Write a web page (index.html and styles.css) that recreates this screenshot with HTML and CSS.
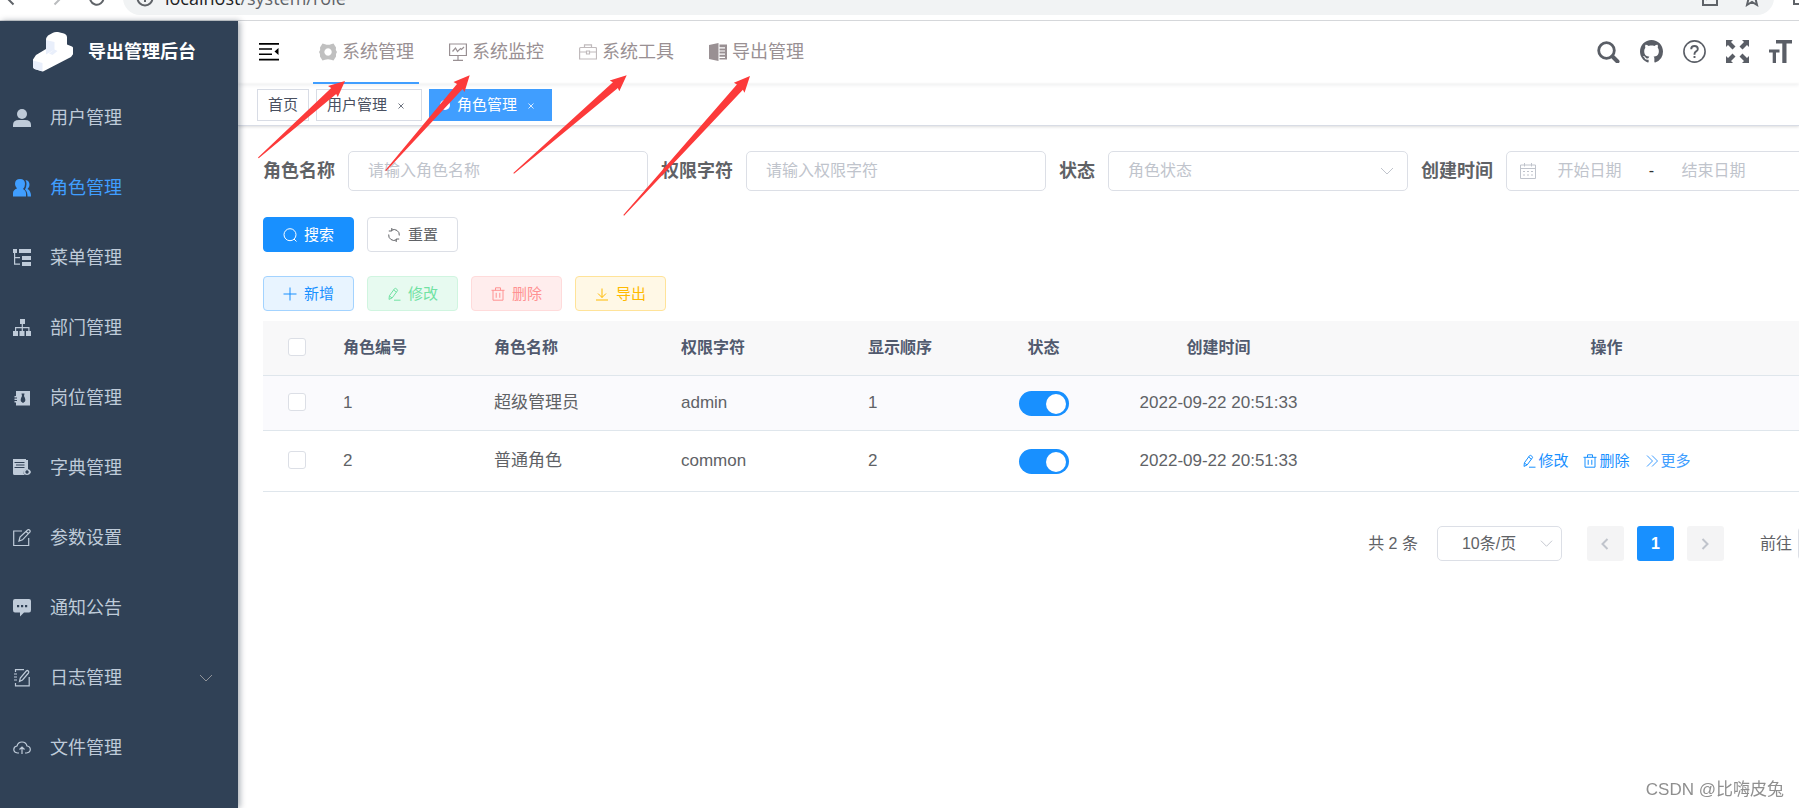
FILE: index.html
```html
<!DOCTYPE html>
<html lang="zh-CN">
<head>
<meta charset="utf-8">
<title>角色管理</title>
<link rel="stylesheet" href="styles.css">
</head>
<body>
<svg class="sprite" aria-hidden="true">
  <symbol id="i-edit" viewBox="0 0 14 14"><path d="M2 12.4 2.4 8.800 7.600 1.600q.4-.6 1-.2l1.700 1.200q.6.4.2 1L5.200 10.900ZM6.600 3l2.900 2.100M2.400 9l2.600 1.900M7 13.200h6.500"/></symbol>
  <symbol id="i-trash" viewBox="0 0 14 14"><path d="M.5 3.300h13M2 3.300v9.900h10V3.300M4.500 3.300V.8h5v2.500M5.200 5.800v5M8.800 5.800v5"/></symbol>
  <symbol id="i-down" viewBox="0 0 14 14"><path d="m1 4 6 6 6-6"/></symbol>
</svg>

<div class="browser">
  <div class="browser-nav">
    <svg viewBox="0 0 20 20"><path d="M17 10H4M10.500 3.500 4 10l6.500 6.500"/></svg>
    <svg class="dim" viewBox="0 0 20 20"><path d="M3 10h13M9.500 3.500 16 10l-6.500 6.500"/></svg>
    <svg viewBox="0 0 20 20"><path d="M16.500 10A6.700 6.700 0 1 1 14.500 5.200M16.500 2v5h-5"/></svg>
  </div>
  <div class="address">
    <svg viewBox="0 0 20 20"><circle cx="10" cy="10" r="7.500"/><path d="M10 9v5M10 6v1.500"/></svg>
    <span class="url"><b>localhost</b>/system/role</span>
    <svg class="share" viewBox="0 0 20 20"><path d="M7 4H3v13h14v-5M6 12c1-4 4-5 10-5M12 3l4 4-4 4"/></svg>
    <svg viewBox="0 0 20 20"><path d="m10 2 2.300 5.300 5.700.5-4.300 3.800L15 17l-5-3-5 3 1.300-5.400L2 7.800l5.700-.5Z"/></svg>
  </div>
  <svg class="panel" viewBox="0 0 20 20"><path d="M3 3h14v13H3Z"/></svg>
</div>

<div class="app">
  <aside class="sidebar">
    <a class="logo" href="#">
      <svg viewBox="0 0 40 40"><path fill="#fff" d="M13 8q0-2.500 2-4.500L20 .8q2-1 5-.8l6 1.500q3 1 3 4v7l5 2q1.500 1 1.500 3v4L38 25 10 39.500 1.500 37Q0 36 0 34.500v-7L3 23l10-6Z"/><path fill="#e9effb" d="M13 8l8.500 2v7.500L13 22.500ZM21.500 17.500l3 1.500-5 4-3.500-1.500ZM0 28.500l9.500 2.500v8.500L1.500 37Q0 36 0 34.500Z"/></svg>
      <span>导出管理后台</span>
    </a>
    <nav class="menu">
      <a href="#"><svg viewBox="0 0 18 18"><circle cx="9" cy="5" r="5"/><path d="M0 18v-2q0-5 6-5h6q6 0 6 5v2Z"/></svg>用户管理</a>
      <a href="#" class="active"><svg viewBox="0 0 18 18"><path d="M7 0q5 0 5 5 0 3-2 5 3 1.500 3 4v3.500H0V14q0-3 4-4.500Q2 7.500 2 5q0-5 5-5ZM12.500 1q4 .5 4 5 0 2.500-2 4 3.500 1.500 3.500 7.500h-3.500q0-5-2.500-7 1.500-3 1.500-5.500T12.500 1Z"/></svg>角色管理</a>
      <a href="#"><svg viewBox="0 0 18 18"><path d="M0 0h4v4H0ZM6 0h12v4H6ZM9 7h9v4H9ZM9 13h9v4H9ZM1 4h1.200v4H7v1.200H2.200V14.500H7v1.200H1Z"/></svg>菜单管理</a>
      <a href="#"><svg viewBox="0 0 18 18"><path d="M7 0h5v5H9.900v3h6.600v4H18v5h-5v-5h2.300V9.200H9.900V12h1.600v5H6.500v-5h2.200V9.200H3.200V12H5v5H0v-5h2V8h6.700V5H7Z"/></svg>部门管理</a>
      <a href="#"><svg viewBox="0 0 18 18"><path fill-rule="evenodd" d="M3 2h14v14.500H3v-3H1.500V12H4v-1H1.500V9.500H4v-1H1.500V7H3ZM8.500 4.500h3L11 7q2 3.500 1 5.500L10 14l-2-1.500Q7 10.500 9 7Z"/></svg>岗位管理</a>
      <a href="#"><svg viewBox="0 0 18 18"><path fill-rule="evenodd" d="M0 0h13v1h2v9l-1.500.3q-2.500.5-3.500 3 .8 2 2 2.700H1.500Q0 16 0 14.500ZM1.500 3v1h10V3ZM3 5.500v1h8.500v-1ZM1.500 8v1h10V8Z"/><path fill-rule="evenodd" d="M14 10q3 0 4 3-1 3-4 3t-4-3q1-3 4-3Zm0 1.300a1.700 1.700 0 1 0 .1 0Z"/></svg>字典管理</a>
      <a href="#"><svg class="line" viewBox="0 0 18 18"><path d="M9 2H.7v14.500h15V9M6 12l1-4 7.500-7q1-.8 2 0t.5 2L9.500 10.800ZM13 2.500l2.300 2"/></svg>参数设置</a>
      <a href="#"><svg viewBox="0 0 18 18"><path fill-rule="evenodd" d="M2 0h14q2 0 2 2v9q0 2.500-2 2.500h-5L7 17.500v-4H2q-2 0-2-2.500V2q0-2 2-2ZM4 6v2.200h2.200V6ZM8 6v2.200h2.200V6ZM12 6v2.200h2.200V6Z"/></svg>通知公告</a>
      <a href="#"><svg class="line" viewBox="0 0 18 18"><path d="M11 .7H2.500V3M2.500 14v2.800h13.700V8M1 5h3M1 8h3M1 11h3M6.500 12.500l.8-3.500 6-7q1-1 2 0t.2 2l-6 7Z"/></svg>日志管理<svg class="arrow"><use href="#i-down"/></svg></a>
      <a href="#"><svg class="line" viewBox="0 0 18 18"><path d="M6 14H4.500Q.8 13.500.8 10.500T4 7q1-4 5-4t5 4q3.300.5 3.300 3.500T13.500 14H12M9 15V8.500M6.500 10.500 9 8l2.500 2.500"/></svg>文件管理</a>
    </nav>
  </aside>

  <main class="main">
    <header class="navbar">
      <button class="burger" aria-label="折叠菜单"><svg viewBox="0 0 20 18"><path d="M0 0h20v1.700H0ZM0 5.200h13v1.600H0ZM0 10.400h13V12H0ZM0 15.800h20v1.700H0ZM19.500 5v7l-4-3.500Z"/></svg></button>
      <nav class="topmenu">
        <a href="#" class="active"><svg viewBox="0 0 18 18"><path fill="#c0c0c0" fill-rule="evenodd" d="M3.500.5 6 1.300q3 1 6 0L14.500.5 17 4.500q-.8 2 1 4.500-1.800 2.500-1 4.500l-2.500 4-2.500-.8q-3-1-6 0l-2.500.8-2.500-4q.8-2-1-4.500 1.800-2.500 1-4.500ZM9 5.300a3.700 3.700 0 1 0 .1 0Z"/></svg>系统管理</a>
        <a href="#"><svg class="line" viewBox="0 0 18 18"><path d="M.6 1h16.800v11.500H.6ZM9 12.500V17M4 17.300h10M3.500 8.500 6.500 5l2 3.500 3-3 1 1L15 4"/></svg>系统监控</a>
        <a href="#"><svg class="line light" viewBox="0 0 18 18"><path d="M1.500 4.500h15q1 0 1 1V16H.6V5.500q0-1 .9-1ZM5.500 4.500V1.800h7v2.700M.6 9h6.900M10.500 9h7M7.500 8h3v3h-3Z"/></svg>系统工具</a>
        <a href="#"><svg viewBox="0 0 18 18"><path d="M0 2 9.500 0v18L0 16ZM10.500 1.500H18v15h-7.500V15H16v-1.200h-5.500v-2H16v-1.200h-5.500v-2H16V7.400h-5.500v-2H16V4.200h-5.500Z"/></svg>导出管理</a>
      </nav>
      <div class="tools">
        <button aria-label="搜索"><svg viewBox="0 0 23 23"><circle cx="9.500" cy="10.500" r="7.800" fill="none" stroke="currentColor" stroke-width="2.800"/><path d="m15.500 16.500 5 5" stroke="currentColor" stroke-width="4" stroke-linecap="round"/></svg></button>
        <button aria-label="GitHub"><svg viewBox="0 0 16 16"><path d="M8 0C3.580 0 0 3.580 0 8c0 3.540 2.290 6.530 5.470 7.590.4.07.55-.17.55-.38 0-.19-.01-.82-.01-1.490-2.010.37-2.530-.49-2.690-.94-.09-.23-.48-.94-.82-1.130-.28-.15-.68-.52-.01-.53.63-.01 1.080.58 1.230.82.72 1.210 1.870.87 2.330.66.07-.52.28-.87.51-1.070-1.780-.2-3.640-.89-3.640-3.950 0-.87.31-1.590.82-2.150-.08-.2-.36-1.020.08-2.120 0 0 .67-.21 2.200.82.64-.18 1.320-.27 2-.27.68 0 1.360.09 2 .27 1.530-1.040 2.200-.82 2.200-.82.44 1.100.16 1.920.08 2.120.51.56.82 1.270.82 2.150 0 3.070-1.870 3.750-3.650 3.950.29.25.54.73.54 1.480 0 1.070-.01 1.930-.01 2.200 0 .21.15.46.55.38A8.013 8.013 0 0 0 16 8c0-4.420-3.580-8-8-8z"/></svg></button>
        <button aria-label="帮助"><svg viewBox="0 0 23 23"><g fill="none" stroke="currentColor" stroke-width="1.600"><circle cx="11.500" cy="11.500" r="10.600"/><path stroke-width="1.900" d="M8.200 9.200q0-3.200 3.300-3.200t3.300 2.900q0 1.500-1.700 2.500-1.600 1-1.600 2.600v.8M11.500 16v2"/></g></svg></button>
        <button aria-label="全屏"><svg viewBox="0 0 23 23"><path d="M0 0h7L5 2l4.500 4.500-3 3L2 5 0 7ZM23 0v7l-2-2-4.500 4.500-3-3L18 2l-2-2ZM0 23v-7l2 2 4.500-4.500 3 3L5 21l2 2ZM23 23h-7l2-2-4.500-4.500 3-3L21 18l2-2Z"/></svg></button>
        <button aria-label="字号"><svg viewBox="0 0 23 23"><path d="M7 0h16v3.500h-5.500V23h-4.200V3.500H7ZM0 9.500h10.500v3H7V23H3.700V12.500H0Z"/></svg></button>
      </div>
    </header>

    <div class="tags">
      <a href="#">首页</a>
      <a href="#">用户管理<svg viewBox="0 0 6 6"><path d="m.5.5 5 5m0-5-5 5"/></svg></a>
      <a href="#" class="active"><i></i>角色管理<svg viewBox="0 0 6 6"><path d="m.5.5 5 5m0-5-5 5"/></svg></a>
    </div>

    <section class="content">
      <form class="filters">
        <div class="field"><label for="name">角色名称</label><input class="box" id="name" type="text" placeholder="请输入角色名称"></div>
        <div class="field"><label for="key">权限字符</label><input class="box" id="key" type="text" placeholder="请输入权限字符"></div>
        <div class="field"><label for="status">状态</label><span class="select"><select class="box" id="status"><option>角色状态</option></select><svg><use href="#i-down"/></svg></span></div>
        <div class="field"><label for="start">创建时间</label>
          <span class="box range">
            <svg viewBox="0 0 16 16"><path d="M.5 2h15v13.500H.5ZM.5 5.500h15M4.500 0v3.500M11.500 0v3.500M3 8.500h2M7 8.500h2M11 8.500h2M3 12h2M7 12h2M11 12h2"/></svg>
            <input id="start" type="text" placeholder="开始日期"><span>-</span><input type="text" aria-label="结束日期" placeholder="结束日期">
          </span>
        </div>
      </form>
      <div class="buttons search">
        <button class="btn primary"><svg viewBox="0 0 14 14"><circle cx="7" cy="6.700" r="6"/><path d="m11 11 2.500 2.500"/></svg>搜索</button>
        <button class="btn"><svg viewBox="0 0 14 14"><path d="M4.500 2.200a5.300 5.300 0 0 1 7.800 5.300M9.500 11.800A5.300 5.300 0 0 1 1.700 6.500M4.800 0v3H1.800M9.200 14v-3h3"/></svg>重置</button>
      </div>
      <div class="buttons">
        <button class="btn add"><svg viewBox="0 0 14 14"><path d="M7 .5v13M.5 7h13"/></svg>新增</button>
        <button class="btn edit" disabled><svg><use href="#i-edit"/></svg>修改</button>
        <button class="btn del" disabled><svg><use href="#i-trash"/></svg>删除</button>
        <button class="btn export"><svg viewBox="0 0 14 14"><path d="M7 1.500v9M3 6.500l4 4 4-4M1 13h12"/></svg>导出</button>
      </div>

      <table class="table">
        <colgroup><col class="c-check"><col class="c-id"><col class="c-text"><col class="c-text"><col class="c-num"><col class="c-num"><col class="c-time"><col></colgroup>
        <thead>
          <tr><th class="mid"><input class="check" type="checkbox" aria-label="全选"></th><th>角色编号</th><th>角色名称</th><th>权限字符</th><th>显示顺序</th><th class="mid">状态</th><th class="mid">创建时间</th><th class="mid">操作</th></tr>
        </thead>
        <tbody>
          <tr class="hover"><td class="mid"><input class="check" type="checkbox" aria-label="选择 1"></td><td>1</td><td>超级管理员</td><td>admin</td><td>1</td><td class="mid"><input class="switch" type="checkbox" role="switch" aria-label="状态 1" checked></td><td class="mid">2022-09-22 20:51:33</td><td></td></tr>
          <tr><td class="mid"><input class="check" type="checkbox" aria-label="选择 2"></td><td>2</td><td>普通角色</td><td>common</td><td>2</td><td class="mid"><input class="switch" type="checkbox" role="switch" aria-label="状态 2" checked></td><td class="mid">2022-09-22 20:51:33</td>
            <td><div class="ops"><button><svg><use href="#i-edit"/></svg>修改</button><button><svg><use href="#i-trash"/></svg>删除</button><button class="more"><svg viewBox="0 0 14 14"><path d="m2 1.500 5.500 5.500L2 12.500M7 1.500 12.500 7 7 12.500"/></svg>更多</button></div></td></tr>
        </tbody>
      </table>

      <div class="pager">
        <span class="total">共 2 条</span>
        <span class="select small"><select class="box" aria-label="每页条数"><option>10条/页</option></select><svg><use href="#i-down"/></svg></span>
        <div class="pages">
          <button aria-label="上一页" disabled><svg viewBox="0 0 14 14"><path d="M9.500 2 4.500 7l5 5"/></svg></button>
          <button class="active">1</button>
          <button aria-label="下一页" disabled><svg viewBox="0 0 14 14"><path d="m4.500 2 5 5-5 5"/></svg></button>
        </div>
        <label class="jump">前往<input class="box" type="text">页</label>
      </div>
    </section>
  </main>
</div>

<svg class="marks" viewBox="0 0 800 230" aria-hidden="true">
  <path d="M345 81 328 86l3.200 2L258 157.500l.7.700L336.200 94l1.600 3ZM469.700 75.300 453.500 82l3.500 2L385.300 170.200l.8.700L462.600 89l1.900 3ZM626.700 75.300 609.700 80.400l3.200 1.800L513.300 173l.7.800L617.900 88l1.400 3.200ZM750 76 733.900 82.800l3 1.600L623.300 215l.8.700L742.900 89.800l1.600 2.900Z"/>
</svg>
<div class="watermark">CSDN @比嗨皮兔</div>
</body>
</html>
```

FILE: styles.css
```css
* { box-sizing: border-box; }
body {
  margin: 0;
  height: 100vh;
  display: flex;
  flex-direction: column;
  overflow: hidden;
  background: #fff;
  color: #606266;
  font-family: "Liberation Sans", "Noto Sans CJK SC", sans-serif;
  font-size: 17px;
  line-height: 22px;
}
a { color: inherit; text-decoration: none; }
button, input, select { font: inherit; color: inherit; }
button { border: 0; padding: 0; background: none; }
svg { flex: none; fill: currentColor; }
use { fill: none; stroke: currentColor; }
.sprite { position: absolute; width: 0; height: 0; }
.line { fill: none; stroke: currentColor; stroke-width: 1.200; }

/* browser bar */
.browser {
  flex: none;
  display: flex;
  align-items: flex-end;
  height: 21px;
  padding-bottom: 5px;
  overflow: hidden;
  border-bottom: 1px solid #d5d7da;
  color: #5f6368;
}
.browser svg { width: 20px; height: 20px; fill: none; stroke: currentColor; stroke-width: 2; }
.browser-nav { display: flex; align-items: center; gap: 22px; height: 34px; width: 123px; padding-left: 3px; }
.browser-nav .dim { color: #babcbe; }
.address {
  flex: 1;
  display: flex;
  align-items: center;
  gap: 10px;
  height: 34px;
  padding: 0 12px;
  border-radius: 17px;
  background: #f1f3f4;
}
.url { font: 18px/26px "Open Sans", sans-serif; }
.url b { font-weight: 400; color: #202124; }
.share { margin-left: auto; margin-right: 12px; }
.panel { margin: 0 -12px 7px 17px; }

.app { flex: 1; display: flex; min-height: 0; }

/* sidebar */
.sidebar {
  flex: none;
  width: 238px;
  position: relative;
  z-index: 2;
  background: #304156;
  color: #bfcbd9;
  box-shadow: 2px 0 6px rgba(0, 21, 41, .35);
  font-size: 18px;
}
.logo { display: flex; align-items: center; gap: 15px; height: 62px; padding-left: 33px; color: #fff; font-weight: 700; }
.logo svg { width: 40px; height: 40px; }
.menu a { display: flex; align-items: center; height: 70px; padding: 0 25px 0 13px; }
.menu a.active { color: #409eff; }
.menu svg { width: 18px; height: 18px; margin-right: 19px; }
.menu .arrow { width: 14px; height: 14px; margin: 0 0 0 auto; color: #909399; }

/* top bar */
.main { flex: 1; min-width: 0; overflow: hidden; }
.navbar {
  display: flex;
  align-items: center;
  height: 63px;
  padding: 0 7px 0 21px;
  box-shadow: 0 1px 4px rgba(0, 21, 41, .08);
}
.burger { display: flex; align-items: center; padding-bottom: 2px; }
.burger svg { width: 20px; height: 18px; fill: #000; }
.topmenu { display: flex; gap: 24px; height: 63px; margin-left: 34px; color: #999093; font-size: 18px; }
.topmenu a { display: flex; align-items: center; gap: 5px; padding: 0 5px 0 6px; border-bottom: 2px solid transparent; }
.topmenu a.active { border-color: #409eff; }
.topmenu svg { width: 18px; height: 18px; }
.topmenu .light { color: #c0babc; }
.tools { display: flex; gap: 20px; margin-left: auto; padding-bottom: 2px; color: #5a5e66; }
.tools button { display: flex; }
.tools svg { width: 23px; height: 23px; }

/* open tabs */
.tags {
  display: flex;
  gap: 7px;
  height: 42px;
  padding: 5px 19px;
  border-bottom: 1px solid #d8dce5;
  box-shadow: 0 1px 3px rgba(0, 0, 0, .12), 0 0 3px rgba(0, 0, 0, .04);
  color: #495060;
  font-size: 15px;
}
.tags a { display: flex; align-items: center; height: 32px; padding: 0 10px; border: 1px solid #d8dce5; }
.tags a.active { border-color: #409eff; background: #409eff; color: #fff; }
.tags svg { width: 6px; height: 6px; margin: 2px 7px 0 11px; fill: none; stroke: currentColor; stroke-width: .8; }
.tags i { width: 10px; height: 10px; margin-right: 7px; border-radius: 50%; background: #fff; }

/* the content pane is wider than the window */
.content { margin-right: -83px; padding: 25px 0 0 25px; }
.filters { display: flex; gap: 13px; }
.field { display: flex; flex: none; align-items: center; gap: 13px; }
.field label { font-size: 18px; font-weight: 700; }
.box {
  width: 300px;
  height: 40px;
  padding: 0 19px;
  border: 1px solid #dcdfe6;
  border-radius: 5px;
  background: #fff;
  font-size: 16px;
  outline: 0;
}
.box::placeholder, .range input::placeholder { color: #c0c4cc; opacity: 1; }
.select { display: grid; align-items: center; }
.select > * { grid-area: 1 / 1; }
.select select { appearance: none; color: #c0c4cc; }
.select svg { justify-self: end; width: 14px; height: 14px; margin-right: 14px; color: #c0c4cc; pointer-events: none; }
.range { display: flex; align-items: center; padding: 0 13px; }
.range svg { width: 16px; height: 16px; fill: none; stroke: #c0c4cc; }
.range input { width: 107px; padding: 0; border: 0; text-align: center; }
.range span { width: 17px; text-align: center; color: #303133; }

.buttons { display: flex; gap: 13px; }
.search { margin: 26px 0 24px; }
.btn {
  display: flex;
  align-items: center;
  justify-content: center;
  gap: 7px;
  width: 91px;
  height: 35px;
  border: 1px solid #dcdfe6;
  border-radius: 4px;
  background: #fff;
  font-size: 15px;
}
.btn svg, .ops svg { width: 14px; height: 14px; fill: none; stroke: currentColor; }
.primary { border-color: #1890ff; background: #1890ff; color: #fff; }
.add { border-color: #a3d3ff; background: #e8f4ff; color: #1890ff; }
.edit { border-color: #d0f5e0; background: #e7faf0; color: #71e2a3; }
.del { border-color: #ffdbdb; background: #ffeded; color: #ff9292; }
.export { border-color: #ffe399; background: #fff8e6; color: #ffba00; }

.table { width: 100%; margin-top: 10px; table-layout: fixed; border-collapse: separate; border-spacing: 0; }
.c-check { width: 68px; }
.c-id { width: 151px; }
.c-text { width: 187px; }
.c-num { width: 125px; }
.c-time { width: 225px; }
.table th, .table td { height: 55px; padding: 0 12px; border-bottom: 1px solid #dfe6ec; text-align: left; vertical-align: middle; }
.table th { background: #f8f8f9; color: #515a6e; font-size: 16px; }
.table .hover td { background: #fafafd; }
.table .mid { text-align: center; }
.check { appearance: none; display: block; width: 18px; height: 18px; margin: 0 auto 2px; border: 1px solid #dcdfe6; border-radius: 3px; background: #fff; }
.switch { appearance: none; display: block; width: 50px; height: 25px; margin: 0 auto; padding: 3px; border-radius: 13px; background: #1890ff; }
.switch::after { content: ""; display: block; width: 20px; height: 20px; margin-left: auto; border-radius: 50%; background: #fff; }
.ops { display: flex; justify-content: center; gap: 15px; padding: 15px 0; }
.ops button { display: flex; align-items: center; gap: 2px; height: 30px; color: #1890ff; font-size: 15px; }
.ops .more { color: #409eff; }

.pager { display: flex; justify-content: flex-end; align-items: center; margin-top: 34px; font-size: 16px; }
.small { margin: 0 25px 0 19px; }
.small .box { width: 125px; height: 35px; padding: 0 24px; color: #606266; }
.small svg { width: 13px; height: 13px; margin-right: 9px; }
.pages { display: flex; gap: 13px; margin-right: 36px; }
.pages button { display: flex; align-items: center; justify-content: center; width: 37px; height: 35px; border-radius: 3px; background: #f4f4f5; color: #c0c4cc; font-weight: 700; }
.pages svg { width: 14px; height: 14px; fill: none; stroke: currentColor; stroke-width: 2; }
.pages .active { background: #1890ff; color: #fff; }
.jump { display: flex; align-items: center; gap: 6px; }
.jump .box { width: 62px; height: 35px; text-align: center; }

/* annotations laid over the page */
.marks { position: absolute; top: 0; left: 0; z-index: 3; width: 800px; height: 230px; fill: #fc3a3a; pointer-events: none; }
.watermark { position: fixed; right: 15px; bottom: 7px; z-index: 3; color: #8f8f8f; font-size: 17px; }
```
